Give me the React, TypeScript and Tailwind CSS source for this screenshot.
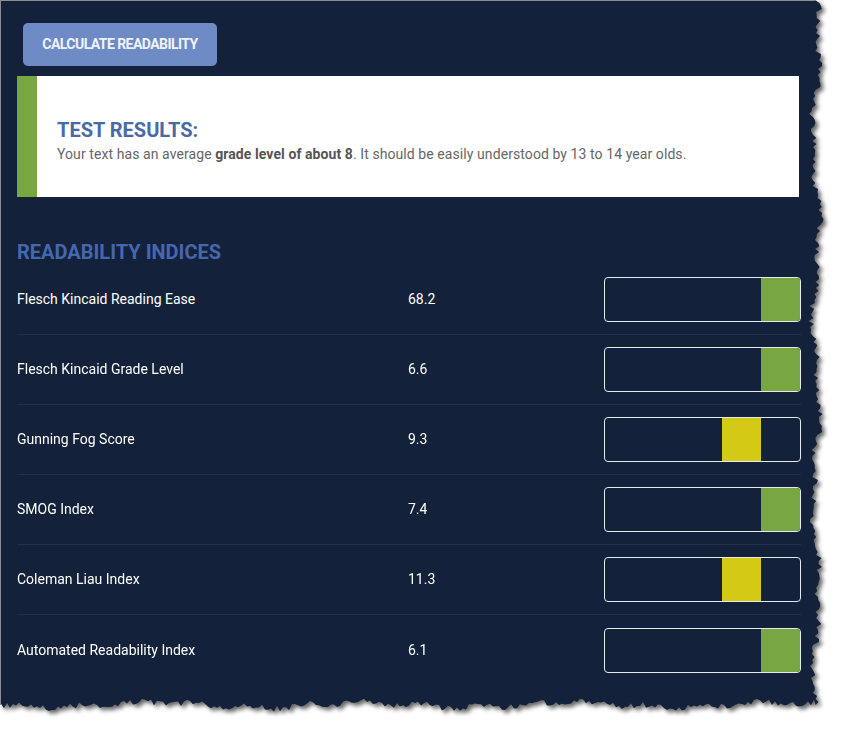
import React from "react";

function mulberry32(a: number) {
  return function () {
    a |= 0;
    a = (a + 0x6d2b79f5) | 0;
    let t = Math.imul(a ^ (a >>> 15), 1 | a);
    t = (t + Math.imul(t ^ (t >>> 7), 61 | t)) ^ t;
    return ((t ^ (t >>> 14)) >>> 0) / 4294967296;
  };
}

function tornPolygon(): string {
  const rnd = mulberry32(1234);
  const pts: string[] = [];
  pts.push("0px 0px");
  const bottom = 705;
  for (let y = 0; y <= bottom; y += 3) {
    const x = 816 + 3 * Math.sin(y / 29) + 2 * Math.sin(y / 11 + 1) + (rnd() - 0.5) * 6;
    pts.push(`${x.toFixed(1)}px ${y}px`);
  }
  for (let x = 814; x >= 0; x -= 3) {
    const y = bottom + 2.5 * Math.sin(x / 33) + 1.5 * Math.sin(x / 9 + 2) + (rnd() - 0.5) * 6;
    pts.push(`${x}px ${y.toFixed(1)}px`);
  }
  pts.push("0px 705px");
  return `polygon(${pts.join(", ")})`;
}

const rows = [
  { label: "Flesch Kincaid Reading Ease", value: "68.2", seg: 4 },
  { label: "Flesch Kincaid Grade Level", value: "6.6", seg: 4 },
  { label: "Gunning Fog Score", value: "9.3", seg: 3 },
  { label: "SMOG Index", value: "7.4", seg: 4 },
  { label: "Coleman Liau Index", value: "11.3", seg: 3 },
  { label: "Automated Readability Index", value: "6.1", seg: 4 },
];

function Bar({ seg }: { seg: number }) {
  return (
    <div className="w-[197px] h-[45px] rounded-[4px] border border-[#e6e9ee] overflow-hidden flex">
      {[0, 1, 2, 3, 4].map((i) => (
        <div
          key={i}
          className={
            "flex-1 " +
            (i === seg ? (seg === 4 ? "bg-[#78a641]" : "bg-[#d4c914]") : "")
          }
        />
      ))}
    </div>
  );
}

export default function App() {
  const clip = tornPolygon();
  return (
    <div className="w-[842px] h-[730px] bg-white overflow-hidden font-['Roboto',_'Liberation_Sans',_sans-serif]">
      <div className="drop-shadow-[3px_3px_2px_rgba(0,0,0,0.6)]">
        <div
          className="w-[830px] h-[716px] bg-[#14213a] border-l border-t border-[#8c8c8c] pl-4 pt-[22px]"
          style={{ clipPath: clip }}
        >
          <div className="w-[784px] flex flex-col">
            <button className="ml-[6px] w-[194px] h-[43px] rounded-[5px] bg-[#6e8bc6] text-[#eef2fa] text-[14px] font-bold tracking-[-0.55px] uppercase">
              Calculate Readability
            </button>
            <div className="mt-[10px] w-[782px] h-[121px] bg-white flex">
              <div className="w-[20px] bg-[#78a641]" />
              <div className="pl-5 pt-[42px]">
                <div className="text-[20px] leading-[24px] font-bold text-[#4a6aa6]">TEST RESULTS:</div>
                <div className="mt-[2px] text-[14px] leading-[20px] tracking-[0.08px] text-[#666666]">
                  Your text has an average <b className="font-bold text-[#555]">grade level of about 8</b>. It should be easily understood by 13 to 14 year olds.
                </div>
              </div>
            </div>
            <div className="mt-[43px] text-[20px] leading-[24px] font-bold text-[#4468ae]">READABILITY INDICES</div>
            <div className="mt-[1px] flex flex-col">
              {rows.map((r, i) => (
                <div
                  key={r.label}
                  className={
                    "h-[70px] flex items-center text-[14px] text-white " +
                    (i < rows.length - 1 ? "border-b border-[#22304a]" : "")
                  }
                >
                  <div className="w-[391px]">{r.label}</div>
                  <div className="w-[196px]">{r.value}</div>
                  <Bar seg={r.seg} />
                </div>
              ))}
            </div>
          </div>
        </div>
      </div>
    </div>
  );
}
